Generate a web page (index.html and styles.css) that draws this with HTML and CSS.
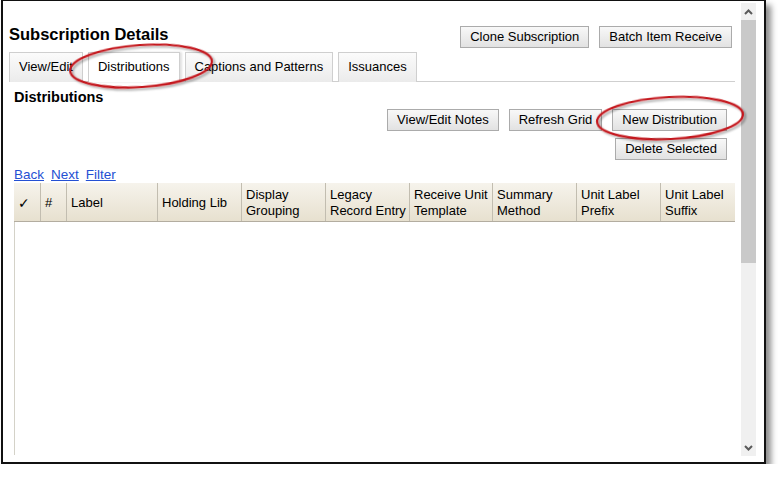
FILE: index.html
```html
<!DOCTYPE html>
<html>
<head>
<meta charset="utf-8">
<link rel="stylesheet" href="styles.css">
</head>
<body>
<div class="window">
  <div class="main">
    <div class="title-row">
      <h1 class="title">Subscription Details</h1>
      <div class="top-actions">
        <button class="btn">Clone Subscription</button>
        <button class="btn">Batch Item Receive</button>
      </div>
    </div>
    <div class="tabs">
      <div class="tab">View/Edit</div>
      <div class="tab active">Distributions</div>
      <div class="tab">Captions and Patterns</div>
      <div class="tab">Issuances</div>
    </div>
    <div class="panel">
      <h2 class="panel-title">Distributions</h2>
      <div class="actions">
        <button class="btn">View/Edit Notes</button>
        <button class="btn">Refresh Grid</button>
        <button class="btn">New Distribution</button>
      </div>
      <div class="actions second">
        <button class="btn">Delete Selected</button>
      </div>
      <div class="links">
        <a href="#">Back</a>
        <a href="#">Next</a>
        <a href="#">Filter</a>
      </div>
      <div class="grid-head">
        <div class="cell check">✓</div>
        <div class="cell">#</div>
        <div class="cell">Label</div>
        <div class="cell">Holding Lib</div>
        <div class="cell">Display<br>Grouping</div>
        <div class="cell">Legacy<br>Record Entry</div>
        <div class="cell">Receive Unit<br>Template</div>
        <div class="cell">Summary<br>Method</div>
        <div class="cell">Unit Label<br>Prefix</div>
        <div class="cell last">Unit Label<br>Suffix</div>
      </div>
      <div class="grid-body"></div>
    </div>
  </div>
  <div class="scrollbar">
    <div class="sb-arrow">
      <svg width="9" height="6" viewBox="0 0 9 6"><path d="M1 5 L4.5 1.5 L8 5" fill="none" stroke="#5a5a5a" stroke-width="2"/></svg>
    </div>
    <div class="sb-thumb"></div>
    <div class="sb-track"></div>
    <div class="sb-arrow">
      <svg width="9" height="6" viewBox="0 0 9 6"><path d="M1 1 L4.5 4.5 L8 1" fill="none" stroke="#5a5a5a" stroke-width="2"/></svg>
    </div>
  </div>
</div>
<svg class="marks" width="780" height="480" viewBox="0 0 780 480">
  <defs>
    <filter id="sh" x="-20%" y="-20%" width="140%" height="140%">
      <feGaussianBlur in="SourceAlpha" stdDeviation="1.2"/>
      <feOffset dx="1.5" dy="1.5" result="b"/>
      <feComponentTransfer><feFuncA type="linear" slope="0.35"/></feComponentTransfer>
      <feMerge><feMergeNode/><feMergeNode in="SourceGraphic"/></feMerge>
    </filter>
  </defs>
  <ellipse cx="141" cy="66" rx="71" ry="21" transform="rotate(-4 141 66)" fill="none" stroke="#c4161c" stroke-width="2.2" filter="url(#sh)"/>
  <ellipse cx="670" cy="118" rx="73" ry="21" transform="rotate(-3 670 118)" fill="none" stroke="#c4161c" stroke-width="2.2" filter="url(#sh)"/>
</svg>
</body>
</html>
```

FILE: styles.css
```css
* { box-sizing: border-box; }

html, body {
  margin: 0;
  padding: 0;
  background: #fff;
  font-family: "Liberation Sans", Arial, sans-serif;
  font-size: 13px;
  color: #000;
}

.window {
  margin-left: 1px;
  width: 765px;
  height: 464px;
  border: 2px solid #111;
  border-top-width: 1px;
  background: #fff;
  display: flex;
  box-shadow: 5px 5px 6px rgba(0, 0, 0, 0.45);
}

.main {
  flex: 1;
  padding: 22px 6px 0 6px;
  display: flex;
  flex-direction: column;
}

.title-row {
  display: flex;
  justify-content: space-between;
  align-items: flex-start;
}

.title {
  margin: 0;
  font-size: 16.5px;
  line-height: 22px;
  font-weight: bold;
}

.top-actions {
  display: flex;
  gap: 10px;
  padding-top: 3px;
  margin-right: 3px;
}

.btn {
  height: 22px;
  padding: 0 9px;
  border: 1px solid #ababab;
  border-radius: 0;
  background: linear-gradient(#f8f8f8, #e2e2e2);
  font-family: "Liberation Sans", Arial, sans-serif;
  font-size: 13px;
  color: #000;
  line-height: 20px;
}

.tabs {
  margin-top: 4px;
  display: flex;
  gap: 5px;
  border-bottom: 1px solid #cfcfcf;
  height: 30px;
}

.tab {
  height: 30px;
  padding: 0 9px;
  border: 1px solid #cfcfcf;
  border-bottom: none;
  background: linear-gradient(#fbfbfb, #ebebeb);
  line-height: 28px;
  white-space: nowrap;
}

.tab.active {
  background: #fff;
  box-shadow: 2px 0 2px rgba(0, 0, 0, 0.12);
  position: relative;
}

.panel {
  padding: 6px 0 0 5px;
  display: flex;
  flex-direction: column;
  flex: 1;
}

.panel-title {
  margin: 0;
  font-size: 14.5px;
  line-height: 18px;
  font-weight: bold;
}

.actions {
  display: flex;
  justify-content: flex-end;
  gap: 10px;
  margin-top: 3px;
  margin-right: 8px;
}

.actions.second {
  margin-top: 7px;
}

.links {
  margin-top: 7px;
  display: flex;
  gap: 7px;
  line-height: 16px;
  font-size: 13.5px;
}

.links a {
  color: #2450d3;
  text-decoration: underline;
}

.grid-head {
  display: grid;
  grid-template-columns: 27px 26px 91px 84px 84px 84px 83px 84px 84px 74px;
  height: 39px;
  background: linear-gradient(#f6f3ec, #e7e0cf);
  border-bottom: 1px solid #b3ada0;
}

.cell {
  border-right: 1px solid #c2bdb0;
  padding: 2px 3px 0 4px;
  display: flex;
  align-items: center;
  line-height: 16px;
  white-space: nowrap;
  overflow: hidden;
}

.cell.last {
  border-right: none;
}

.cell.check {
  font-family: "DejaVu Sans", sans-serif;
  font-size: 14px;
  color: #000;
}

.grid-body {
  height: 233px;
  border-left: 1px solid #d4d2c8;
}

.scrollbar {
  width: 15px;
  margin: 2px 8px 6px 0;
  background: #f0f0f0;
  display: flex;
  flex-direction: column;
}

.sb-arrow {
  height: 17px;
  display: flex;
  align-items: center;
  justify-content: center;
}

.sb-thumb {
  height: 243px;
  background: #c9c9c9;
}

.sb-track {
  flex: 1;
}

.marks {
  position: absolute;
  left: 0;
  top: 0;
  pointer-events: none;
}
```
